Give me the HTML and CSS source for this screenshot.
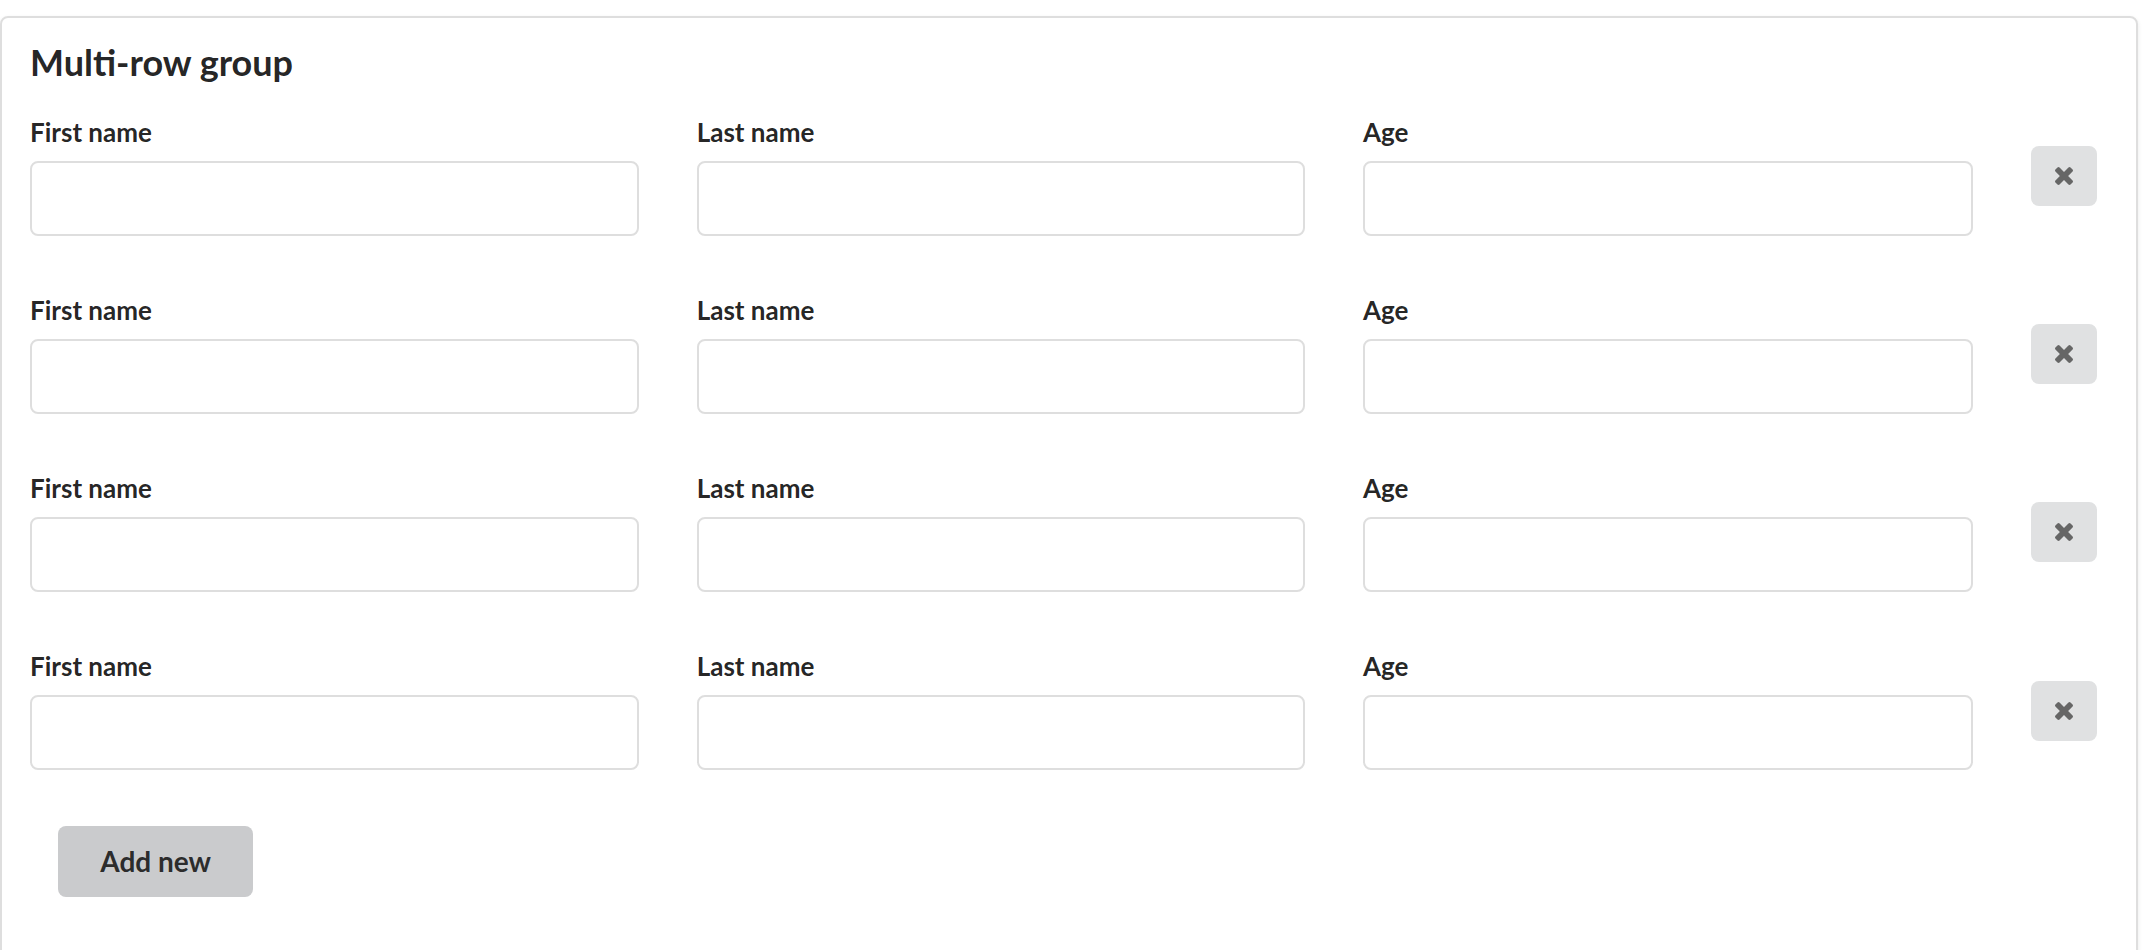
FILE: index.html
```html
<!DOCTYPE html>
<html lang="en">
<head>
<meta charset="utf-8">
<title>Multi-row group</title>
<link rel="stylesheet" href="styles.css">
</head>
<body>
<div class="card">
  <h3 class="title">Multi-row group</h3>
  <div class="rows">
    <div class="row">
      <div class="field"><label class="label">First name</label><input class="input" type="text"></div>
      <div class="field"><label class="label">Last name</label><input class="input" type="text"></div>
      <div class="field"><label class="label">Age</label><input class="input" type="text"></div>
      <button class="remove" type="button" aria-label="Remove"><svg class="x" viewBox="110 366 1188 1188" width="18" height="18"><path d="M1298 1322q0 40-28 68l-136 136q-28 28-68 28t-68-28l-294-294-294 294q-28 28-68 28t-68-28l-136-136q-28-28-28-68t28-68l294-294-294-294q-28-28-28-68t28-68l136-136q28-28 68-28t68 28l294 294 294-294q28-28 68-28t68 28l136 136q28 28 28 68t-28 68l-294 294 294 294q28 28 28 68z"/></svg></button>
    </div>
    <div class="row">
      <div class="field"><label class="label">First name</label><input class="input" type="text"></div>
      <div class="field"><label class="label">Last name</label><input class="input" type="text"></div>
      <div class="field"><label class="label">Age</label><input class="input" type="text"></div>
      <button class="remove" type="button" aria-label="Remove"><svg class="x" viewBox="110 366 1188 1188" width="18" height="18"><path d="M1298 1322q0 40-28 68l-136 136q-28 28-68 28t-68-28l-294-294-294 294q-28 28-68 28t-68-28l-136-136q-28-28-28-68t28-68l294-294-294-294q-28-28-28-68t28-68l136-136q28-28 68-28t68 28l294 294 294-294q28-28 68-28t68 28l136 136q28 28 28 68t-28 68l-294 294 294 294q28 28 28 68z"/></svg></button>
    </div>
    <div class="row">
      <div class="field"><label class="label">First name</label><input class="input" type="text"></div>
      <div class="field"><label class="label">Last name</label><input class="input" type="text"></div>
      <div class="field"><label class="label">Age</label><input class="input" type="text"></div>
      <button class="remove" type="button" aria-label="Remove"><svg class="x" viewBox="110 366 1188 1188" width="18" height="18"><path d="M1298 1322q0 40-28 68l-136 136q-28 28-68 28t-68-28l-294-294-294 294q-28 28-68 28t-68-28l-136-136q-28-28-28-68t28-68l294-294-294-294q-28-28-28-68t28-68l136-136q28-28 68-28t68 28l294 294 294-294q28-28 68-28t68 28l136 136q28 28 28 68t-28 68l-294 294 294 294q28 28 28 68z"/></svg></button>
    </div>
    <div class="row">
      <div class="field"><label class="label">First name</label><input class="input" type="text"></div>
      <div class="field"><label class="label">Last name</label><input class="input" type="text"></div>
      <div class="field"><label class="label">Age</label><input class="input" type="text"></div>
      <button class="remove" type="button" aria-label="Remove"><svg class="x" viewBox="110 366 1188 1188" width="18" height="18"><path d="M1298 1322q0 40-28 68l-136 136q-28 28-68 28t-68-28l-294-294-294 294q-28 28-68 28t-68-28l-136-136q-28-28-28-68t28-68l294-294-294-294q-28-28-28-68t28-68l136-136q28-28 68-28t68 28l294 294 294-294q28-28 68-28t68 28l136 136q28 28 28 68t-28 68l-294 294 294 294q28 28 28 68z"/></svg></button>
    </div>
  </div>
  <button class="add" type="button">Add new</button>
</div>
</body>
</html>
```
FILE: styles.css
```css
html, body {
  margin: 0;
  padding: 0;
  overflow: hidden;
  background: #ffffff;
}

body {
  font-family: Lato, "Open Sans", "Liberation Sans", sans-serif;
  color: rgba(0, 0, 0, 0.87);
}

.card {
  margin: 16px 12px 0 0;
  border: 2px solid #dedede;
  border-radius: 8px;
  box-shadow: 0 2px 4px 0 rgba(34, 36, 38, 0.1);
  padding: 21px 28px 80px 28px;
}

.title {
  margin: 0 0 28.5px 0;
  font-size: 36px;
  line-height: 46px;
  font-weight: 700;
  color: rgba(0, 0, 0, 0.87);
}

.rows {
  display: flex;
  flex-direction: column;
  gap: 56.26px;
}

.row {
  display: grid;
  grid-template-columns: 609px 608.5px 610.5px 66px;
  column-gap: 57.7px;
  align-items: start;
}

.field {
  display: flex;
  flex-direction: column;
}

.label {
  display: block;
  font-size: 26px;
  line-height: 36px;
  font-weight: 700;
  margin-bottom: 11px;
  color: rgba(0, 0, 0, 0.87);
}

.input {
  box-sizing: border-box;
  height: 75px;
  width: 100%;
  margin: 0;
  border: 2px solid #dedede;
  border-radius: 8px;
  background: #ffffff;
  font-family: inherit;
  font-size: 28px;
  padding: 0 28px;
  outline: none;
}

.remove {
  margin-top: 32.4px;
  width: 66px;
  height: 60px;
  border: 0;
  padding: 0;
  border-radius: 8px;
  background: #e0e1e2;
  display: flex;
  align-items: center;
  justify-content: center;
}

.x {
  display: block;
  fill: #666666;
}

.add {
  margin: 55.6px 0 0 28.3px;
  border: 0;
  border-radius: 8px;
  background: #cacbcd;
  color: rgba(0, 0, 0, 0.8);
  font-family: inherit;
  font-size: 28px;
  font-weight: 700;
  line-height: 27px;
  padding: 22px 42px;
}
```
